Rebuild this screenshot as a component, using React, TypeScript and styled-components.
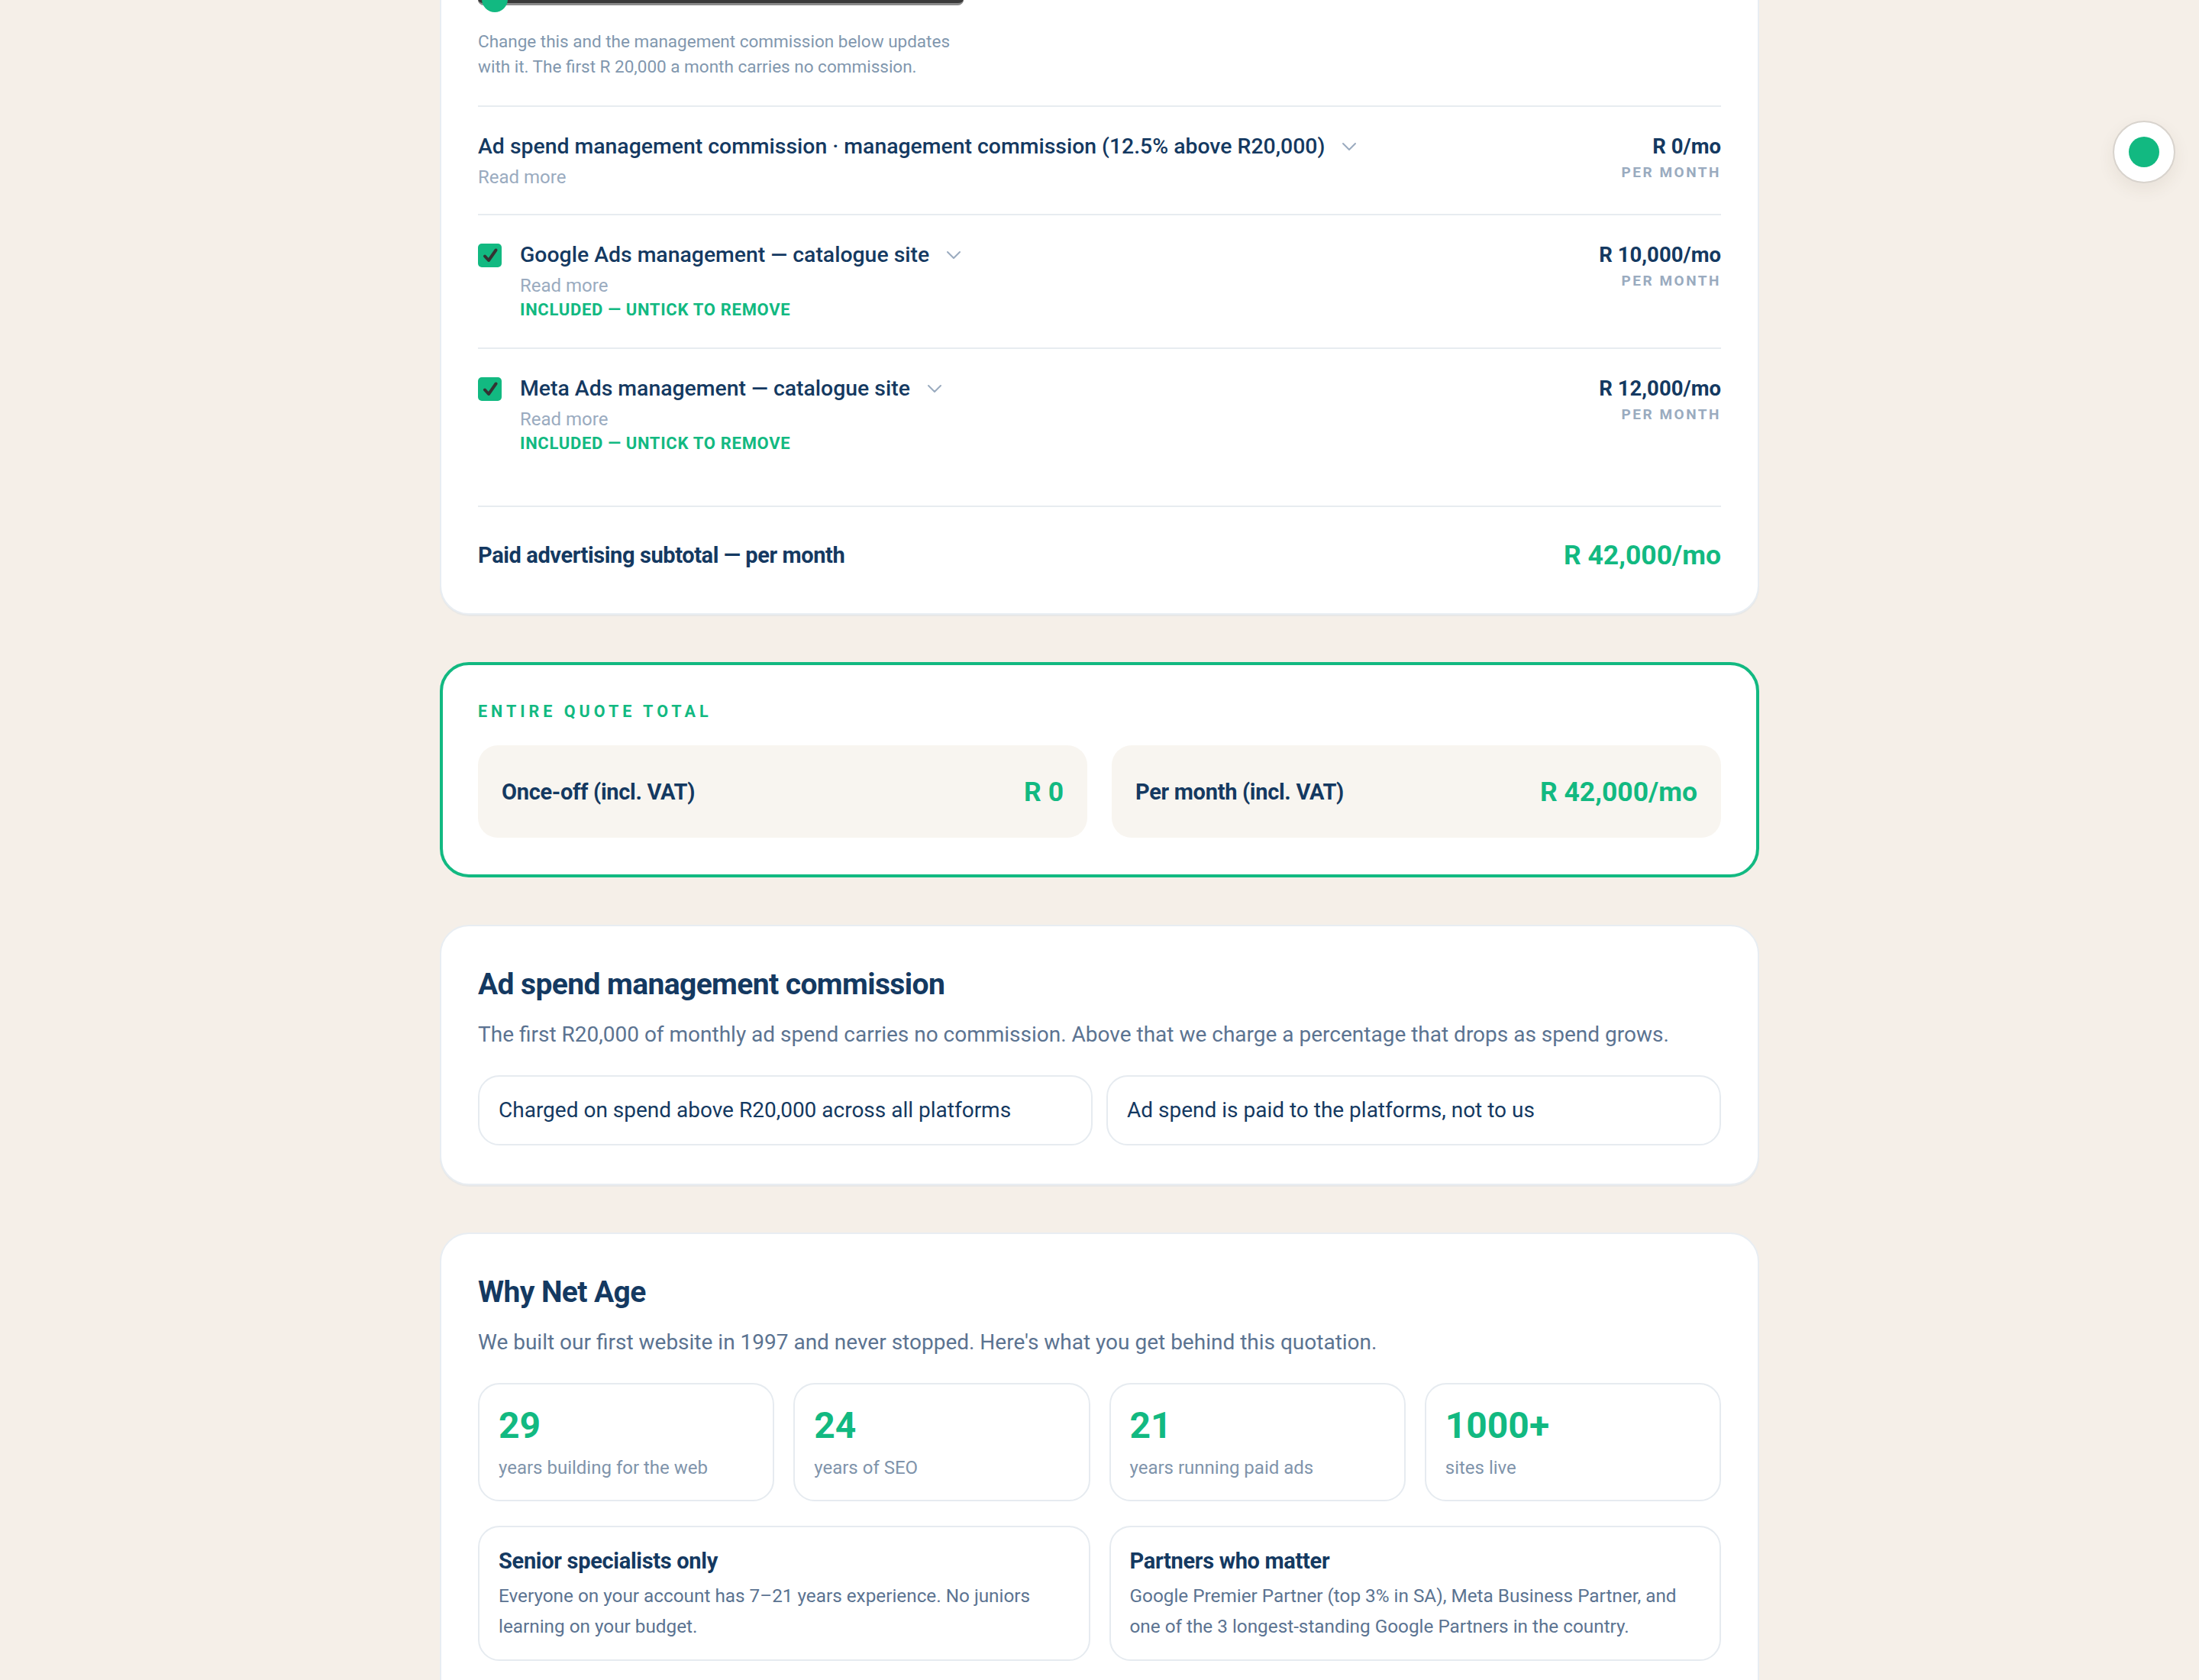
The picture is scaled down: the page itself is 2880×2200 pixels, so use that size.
import React from "react";
import styled, { createGlobalStyle } from "styled-components";

const GlobalStyle = createGlobalStyle`
  * { box-sizing: border-box; }
  html, body { margin: 0; padding: 0; background: #f5efe8; }
  body {
    font-family: Roboto, "Noto Sans", "Liberation Sans", sans-serif;
    color: #143961;
    -webkit-font-smoothing: antialiased;
  }
`;

const NAVY = "#143961";
const GREEN = "#12b981";
const MUTED = "#9aabbf";
const SLATE = "#5b7391";
const LINE = "#e7ecf0";

const Page = styled.main`
  width: 1728px;
  margin: 0 auto;
  display: flex;
  flex-direction: column;
  gap: 62px;
  padding-bottom: 120px;
`;

const Card = styled.section<{ $offset?: number }>`
  background: #ffffff;
  border: 2px solid #e8edf2;
  border-radius: 38px;
  padding: 52px 48px 50px;
  margin-top: ${(p) => (p.$offset ? `${p.$offset}px` : "0")};
  box-shadow: 0 2px 0 rgba(210, 220, 230, 0.35);
`;

/* ---------- ad spend slider ---------- */

const SliderRow = styled.div`
  position: relative;
  width: 636px;
  height: 34px;
  display: flex;
  align-items: center;
`;

const Track = styled.div`
  width: 100%;
  height: 15px;
  background: #3a3a3a;
  border-bottom: 3px solid #8a8a8a;
  border-radius: 8px;
`;

const Thumb = styled.div`
  position: absolute;
  left: 5px;
  top: 0;
  width: 34px;
  height: 34px;
  border-radius: 50%;
  background: ${GREEN};
`;

const Helper = styled.p`
  width: 640px;
  margin: 22px 0 34px;
  font-size: 22.5px;
  line-height: 33px;
  color: #8197ae;
`;

/* ---------- line items ---------- */

const Rows = styled.div`
  border-top: 2px solid ${LINE};
`;

const Row = styled.div<{ $last?: boolean }>`
  display: flex;
  justify-content: space-between;
  align-items: flex-start;
  padding: 34px 0 33px;
  border-bottom: ${(p) => (p.$last ? "none" : `2px solid ${LINE}`)};
`;

const RowMain = styled.div`
  display: flex;
  align-items: flex-start;
  gap: 24px;
`;

const CheckBox = styled.span`
  flex: none;
  width: 31px;
  height: 31px;
  margin-top: 3px;
  border-radius: 5px;
  background: ${GREEN};
  display: flex;
  align-items: center;
  justify-content: center;
`;

const RowText = styled.div`
  display: flex;
  flex-direction: column;
`;

const RowTitle = styled.div`
  display: flex;
  align-items: center;
  gap: 22px;
  font-size: 28.4px;
  line-height: 36px;
  font-weight: 500;
  color: ${NAVY};
`;

const ReadMore = styled.span`
  margin-top: 7px;
  font-size: 24px;
  line-height: 30px;
  color: ${MUTED};
`;

const Included = styled.span`
  margin: 4px 0 3px;
  font-size: 22px;
  line-height: 26px;
  font-weight: 700;
  letter-spacing: 0.7px;
  color: ${GREEN};
`;

const PriceCol = styled.div`
  display: flex;
  flex-direction: column;
  align-items: flex-end;
  text-align: right;
`;

const Price = styled.span`
  font-size: 27.5px;
  line-height: 36px;
  font-weight: 700;
  color: ${NAVY};
`;

const Period = styled.span`
  margin-top: 4px;
  font-size: 19px;
  line-height: 24px;
  font-weight: 700;
  letter-spacing: 2.5px;
  color: ${MUTED};
`;

const Subtotal = styled.div`
  margin-top: 32px;
  border-top: 2px solid ${LINE};
  padding: 41px 0 4px;
  display: flex;
  justify-content: space-between;
  align-items: center;
`;

const SubLabel = styled.span`
  font-size: 29px;
  line-height: 36px;
  font-weight: 700;
  letter-spacing: -0.4px;
  color: ${NAVY};
`;

const SubValue = styled.span`
  font-size: 35.5px;
  line-height: 44px;
  font-weight: 700;
  color: ${GREEN};
`;

/* ---------- quote total ---------- */

const TotalCard = styled.section`
  background: #ffffff;
  border: 4px solid ${GREEN};
  border-radius: 38px;
  padding: 48px 46px;
`;

const Eyebrow = styled.div`
  font-size: 21.5px;
  line-height: 26px;
  font-weight: 700;
  letter-spacing: 5px;
  color: ${GREEN};
`;

const TotalGrid = styled.div`
  margin-top: 31px;
  display: grid;
  grid-template-columns: 1fr 1fr;
  gap: 32px;
`;

const TotalBox = styled.div`
  height: 121px;
  padding: 0 31px;
  border-radius: 26px;
  background: #f8f5f0;
  display: flex;
  justify-content: space-between;
  align-items: center;
`;

const TotalLabel = styled.span`
  font-size: 29px;
  font-weight: 700;
  letter-spacing: -0.3px;
  color: ${NAVY};
`;

const TotalValue = styled.span`
  font-size: 35.5px;
  font-weight: 700;
  color: ${GREEN};
`;

/* ---------- info sections ---------- */

const Heading = styled.h2`
  margin: 0;
  font-size: 39px;
  line-height: 48px;
  font-weight: 700;
  letter-spacing: -0.6px;
  color: ${NAVY};
`;

const Lead = styled.p`
  margin: 20px 0 0;
  font-size: 28px;
  line-height: 44px;
  color: ${SLATE};
`;

const PillGrid = styled.div`
  margin-top: 31px;
  display: grid;
  grid-template-columns: 1fr 1fr;
  gap: 18px;
`;

const Pill = styled.div`
  border: 2px solid #e6ebf0;
  border-radius: 28px;
  padding: 22px 25px;
  font-size: 28px;
  line-height: 44px;
  color: ${NAVY};
`;

const StatGrid = styled.div`
  margin-top: 31px;
  display: grid;
  grid-template-columns: repeat(4, 1fr);
  gap: 25px;
`;

const StatCard = styled.div`
  border: 2px solid #e6ebf0;
  border-radius: 28px;
  padding: 25px 25px 24px;
  display: flex;
  flex-direction: column;
  gap: 8px;
`;

const StatValue = styled.span`
  font-size: 48px;
  line-height: 58px;
  font-weight: 700;
  color: ${GREEN};
`;

const StatLabel = styled.span`
  font-size: 24px;
  line-height: 36px;
  color: #7f94ab;
`;

const FeatureGrid = styled.div`
  margin-top: 32px;
  display: grid;
  grid-template-columns: 1fr 1fr;
  gap: 25px;
`;

const FeatureCard = styled.div`
  border: 2px solid #e6ebf0;
  border-radius: 28px;
  padding: 26px 25px 23px;
  display: flex;
  flex-direction: column;
  gap: 8px;
`;

const FeatureTitle = styled.span`
  font-size: 29px;
  line-height: 36px;
  font-weight: 700;
  letter-spacing: -0.3px;
  color: ${NAVY};
`;

const FeatureBody = styled.span`
  font-size: 24.3px;
  line-height: 40px;
  color: ${SLATE};
`;

/* ---------- floating status button ---------- */

const FloatButton = styled.button`
  position: fixed;
  top: 158px;
  right: 31px;
  width: 82px;
  height: 82px;
  border-radius: 50%;
  border: 2px solid #d8d3cd;
  background: #ffffff;
  box-shadow: 0 8px 22px rgba(80, 60, 40, 0.08);
  display: flex;
  align-items: center;
  justify-content: center;
  padding: 0;
  cursor: pointer;
`;

const Dot = styled.span`
  width: 40px;
  height: 40px;
  border-radius: 50%;
  background: ${GREEN};
`;

const Chevron = () => (
  <svg width="20" height="12" viewBox="0 0 20 12" fill="none">
    <path d="M2 2l8 8 8-8" stroke={MUTED} strokeWidth="2" strokeLinecap="round" strokeLinejoin="round" />
  </svg>
);

const Tick = () => (
  <svg width="22" height="22" viewBox="0 0 22 22" fill="none">
    <path d="M4 11.5l5 5.5L18.5 3.5" stroke="#333333" strokeWidth="4" strokeLinecap="round" strokeLinejoin="round" />
  </svg>
);

type Item = { title: string; price: string; checked?: boolean };

const items: Item[] = [
  { title: "Ad spend management commission · management commission (12.5% above R20,000)", price: "R 0/mo" },
  { title: "Google Ads management — catalogue site", price: "R 10,000/mo", checked: true },
  { title: "Meta Ads management — catalogue site", price: "R 12,000/mo", checked: true },
];

const stats = [
  { value: "29", label: "years building for the web" },
  { value: "24", label: "years of SEO" },
  { value: "21", label: "years running paid ads" },
  { value: "1000+", label: "sites live" },
];

const features = [
  {
    title: "Senior specialists only",
    body: "Everyone on your account has 7–21 years experience. No juniors learning on your budget.",
  },
  {
    title: "Partners who matter",
    body: "Google Premier Partner (top 3% in SA), Meta Business Partner, and one of the 3 longest-standing Google Partners in the country.",
  },
  {
    title: "Straight-talking reporting",
    body: "Monthly reports in plain language, tied to the numbers that matter to your business.",
  },
  {
    title: "No lock-in contracts",
    body: "Month-to-month on every retainer. We keep your business by earning it.",
  },
];

export default function App() {
  return (
    <>
      <GlobalStyle />
      <Page>
        <Card $offset={-72}>
          <SliderRow>
            <Track />
            <Thumb />
          </SliderRow>
          <Helper>
            Change this and the management commission below updates with it. The first R 20,000 a month carries no
            commission.
          </Helper>
          <Rows>
            {items.map((it, i) => (
              <Row key={it.title} $last={i === items.length - 1}>
                <RowMain>
                  {it.checked && (
                    <CheckBox>
                      <Tick />
                    </CheckBox>
                  )}
                  <RowText>
                    <RowTitle>
                      <span>{it.title}</span>
                      <Chevron />
                    </RowTitle>
                    <ReadMore>Read more</ReadMore>
                    {it.checked && <Included>INCLUDED — UNTICK TO REMOVE</Included>}
                  </RowText>
                </RowMain>
                <PriceCol>
                  <Price>{it.price}</Price>
                  <Period>PER MONTH</Period>
                </PriceCol>
              </Row>
            ))}
          </Rows>
          <Subtotal>
            <SubLabel>Paid advertising subtotal — per month</SubLabel>
            <SubValue>R 42,000/mo</SubValue>
          </Subtotal>
        </Card>

        <TotalCard>
          <Eyebrow>ENTIRE QUOTE TOTAL</Eyebrow>
          <TotalGrid>
            <TotalBox>
              <TotalLabel>Once-off (incl. VAT)</TotalLabel>
              <TotalValue>R 0</TotalValue>
            </TotalBox>
            <TotalBox>
              <TotalLabel>Per month (incl. VAT)</TotalLabel>
              <TotalValue>R 42,000/mo</TotalValue>
            </TotalBox>
          </TotalGrid>
        </TotalCard>

        <Card>
          <Heading>Ad spend management commission</Heading>
          <Lead>
            The first R20,000 of monthly ad spend carries no commission. Above that we charge a percentage that drops as
            spend grows.
          </Lead>
          <PillGrid>
            <Pill>Charged on spend above R20,000 across all platforms</Pill>
            <Pill>Ad spend is paid to the platforms, not to us</Pill>
          </PillGrid>
        </Card>

        <Card>
          <Heading>Why Net Age</Heading>
          <Lead>We built our first website in 1997 and never stopped. Here's what you get behind this quotation.</Lead>
          <StatGrid>
            {stats.map((s) => (
              <StatCard key={s.label}>
                <StatValue>{s.value}</StatValue>
                <StatLabel>{s.label}</StatLabel>
              </StatCard>
            ))}
          </StatGrid>
          <FeatureGrid>
            {features.map((f) => (
              <FeatureCard key={f.title}>
                <FeatureTitle>{f.title}</FeatureTitle>
                <FeatureBody>{f.body}</FeatureBody>
              </FeatureCard>
            ))}
          </FeatureGrid>
        </Card>
      </Page>
      <FloatButton aria-label="Status">
        <Dot />
      </FloatButton>
    </>
  );
}
